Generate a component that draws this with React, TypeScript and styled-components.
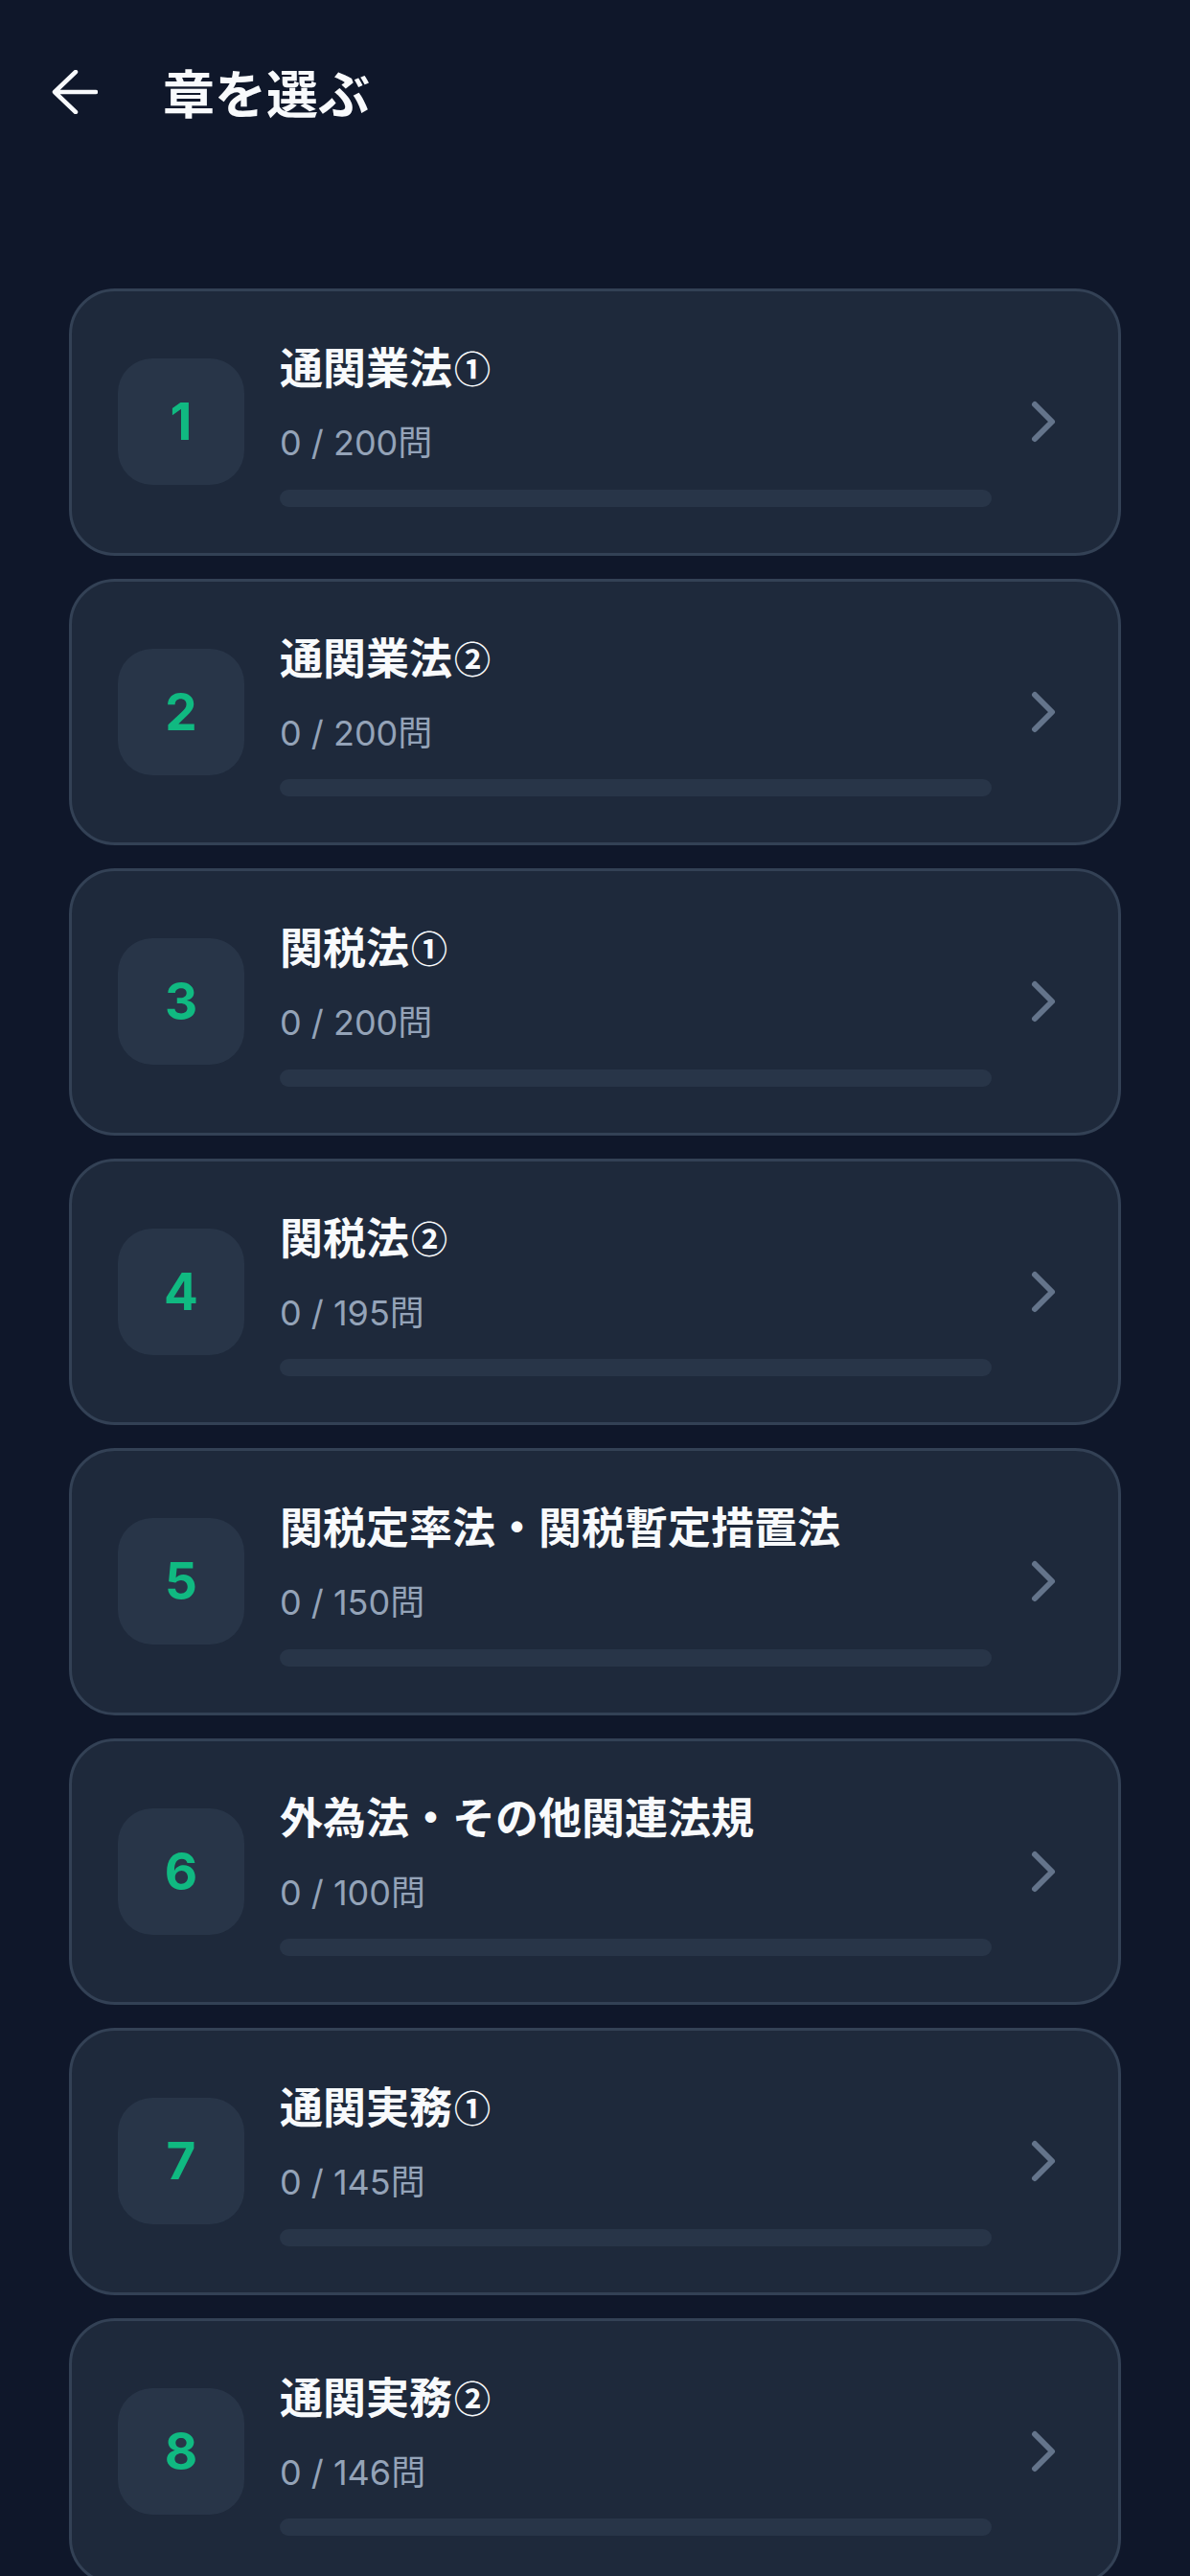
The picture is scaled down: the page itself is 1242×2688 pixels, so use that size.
import React from "react";
import styled, { createGlobalStyle } from "styled-components";
import { ChevronRight } from "lucide-react";

const GlobalStyle = createGlobalStyle`
  html, body {
    margin: 0;
    padding: 0;
    background: #0f172a;
  }
  body {
    font-family: Inter, "Noto Sans CJK JP", sans-serif;
    -webkit-font-smoothing: antialiased;
  }
`;

const Page = styled.div`
  min-height: 2688px;
  background: #0f172a;
`;

const Header = styled.header`
  height: 192px;
  display: flex;
  align-items: center;
  padding: 0 54px;
  box-sizing: border-box;
  gap: 68px;
`;

const BackButton = styled.button`
  display: flex;
  align-items: center;
  justify-content: center;
  width: 48px;
  height: 46px;
  padding: 0;
  border: none;
  background: transparent;
  color: #f8fafc;
`;

const PageTitle = styled.h1`
  margin: 0;
  font-family: "Noto Sans CJK JP", sans-serif;
  font-size: 54px;
  font-weight: 700;
  line-height: 1;
  color: #f8fafc;
`;

const List = styled.div`
  display: flex;
  flex-direction: column;
  gap: 24px;
  padding: 109px 72px 72px;
`;

const Card = styled.div`
  display: flex;
  align-items: center;
  padding: 48px 42px 48px 48px;
  border: 3px solid #334155;
  border-radius: 48px;
  background: #1e293b;
`;

const NumberBox = styled.div`
  flex: none;
  width: 132px;
  height: 132px;
  border-radius: 36px;
  background: #283548;
  display: flex;
  align-items: center;
  justify-content: center;
  font-family: Inter, sans-serif;
  font-size: 53px;
  font-weight: 700;
  color: #10b981;
`;

const Body = styled.div`
  flex: 1;
  min-width: 0;
  margin-left: 37px;
  display: flex;
  flex-direction: column;
`;

const ChapterTitle = styled.div`
  font-family: "Noto Sans CJK JP", sans-serif;
  font-size: 45px;
  font-weight: 700;
  line-height: 60px;
  height: 60px;
  color: #f8fafc;
  white-space: nowrap;
`;

const Circled = styled.span`
  font-size: 38px;
  font-weight: 700;
  line-height: 1;
  margin-left: 2px;
  vertical-align: 2px;
`;

const Count = styled.div`
  margin-top: 24px;
  font-family: Inter, "Noto Sans CJK JP", sans-serif;
  font-size: 36px;
  line-height: 52px;
  height: 52px;
  color: #94a3b8;
`;

const Track = styled.div`
  margin-top: 22.5px;
  height: 18px;
  border-radius: 9px;
  background: #283548;
  overflow: hidden;
`;

const Fill = styled.div`
  height: 100%;
  border-radius: 9px;
  background: #10b981;
`;

const Arrow = styled.div`
  flex: none;
  margin-left: 18px;
  width: 72px;
  height: 72px;
  color: #64748b;
  display: flex;
`;

const chapters = [
  { no: 1, title: "通関業法", mark: "①", done: 0, total: 200 },
  { no: 2, title: "通関業法", mark: "②", done: 0, total: 200 },
  { no: 3, title: "関税法", mark: "①", done: 0, total: 200 },
  { no: 4, title: "関税法", mark: "②", done: 0, total: 195 },
  { no: 5, title: "関税定率法・関税暫定措置法", mark: "", done: 0, total: 150 },
  { no: 6, title: "外為法・その他関連法規", mark: "", done: 0, total: 100 },
  { no: 7, title: "通関実務", mark: "①", done: 0, total: 145 },
  { no: 8, title: "通関実務", mark: "②", done: 0, total: 146 },
];

function BackArrow() {
  return (
    <svg width="48" height="46" viewBox="0 0 48 46" fill="none">
      <path
        d="M46 23H3M25 2 3 23l22 21"
        stroke="currentColor"
        strokeWidth="4.5"
        strokeLinecap="round"
        strokeLinejoin="round"
      />
    </svg>
  );
}

export default function App() {
  return (
    <Page>
      <GlobalStyle />
      <Header>
        <BackButton aria-label="戻る">
          <BackArrow />
        </BackButton>
        <PageTitle>章を選ぶ</PageTitle>
      </Header>
      <List>
        {chapters.map((c) => (
          <Card key={c.no}>
            <NumberBox>{c.no}</NumberBox>
            <Body>
              <ChapterTitle>
                {c.title}
                {c.mark && <Circled>{c.mark}</Circled>}
              </ChapterTitle>
              <Count>
                {c.done} / {c.total}問
              </Count>
              <Track>
                <Fill style={{ width: `${(c.done / c.total) * 100}%` }} />
              </Track>
            </Body>
            <Arrow>
              <ChevronRight size={72} strokeWidth={2} />
            </Arrow>
          </Card>
        ))}
      </List>
    </Page>
  );
}
